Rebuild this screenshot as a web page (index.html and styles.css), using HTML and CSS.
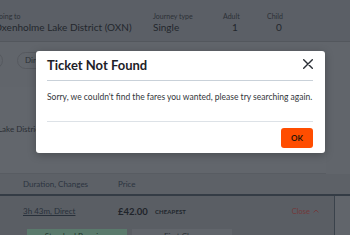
FILE: index.html
```html
<!DOCTYPE html>
<html>
<head>
<meta charset="utf-8">
<link rel="stylesheet" href="styles.css">
</head>
<body>
<div class="page">
  <div class="header">
    <div class="col col-going">
      <div class="label">Going to</div>
      <div class="value">Oxenholme Lake District (OXN)</div>
    </div>
    <div class="col col-journey">
      <div class="label">Journey type</div>
      <div class="value">Single</div>
    </div>
    <div class="col col-adult">
      <div class="label">Adult</div>
      <div class="value">1</div>
    </div>
    <div class="col col-child">
      <div class="label">Child</div>
      <div class="value">0</div>
    </div>
  </div>
  <div class="filters">
    <div class="pill pill-cut">Anytime</div>
    <div class="pill">Direct only</div>
  </div>
  <div class="summary">
    <div class="summary-text">Lake District</div>
  </div>
  <div class="table-head">
    <div class="th th-dur">Duration, Changes</div>
    <div class="th th-price">Price</div>
  </div>
  <div class="result">
    <div class="row">
      <div class="dur">3h 43m, Direct</div>
      <div class="price">£42.00</div>
      <div class="tag">CHEAPEST</div>
      <div class="close">Close <svg class="chev" width="6" height="4" viewBox="0 0 6 4"><path d="M0.6 3.4L3 1L5.4 3.4" stroke="#73393b" stroke-width="0.9" fill="none"/></svg></div>
    </div>
    <div class="classes">
      <div class="cls cls-std">Standard Premium</div>
      <div class="cls cls-first">First Class</div>
    </div>
  </div>
</div>
<div class="modal">
  <div class="modal-head">
    <div class="modal-title">Ticket Not Found</div>
    <svg class="x" width="10" height="10" viewBox="0 0 10 10"><path d="M0.7 0.7L9.3 9.3M9.3 0.7L0.7 9.3" stroke="#2b2f36" stroke-width="1.4" fill="none" stroke-linecap="round"/></svg>
  </div>
  <div class="modal-body">Sorry, we couldn't find the fares you wanted, please try searching again.</div>
  <div class="modal-foot">
    <button class="ok">OK</button>
  </div>
</div>
</body>
</html>
```
FILE: styles.css
```css
* { box-sizing: border-box; }
html, body { margin: 0; padding: 0; }
body {
  width: 350px;
  height: 235px;
  overflow: hidden;
  background: #61656b;
  font-family: Lato, "Noto Sans", sans-serif;
  color: #24282e;
  position: relative;
}
.page { width: 350px; }
.header {
  height: 42px;
  background: #5b5f66;
  border-bottom: 1px solid #53575d;
  display: flex;
  padding-top: 11px;
}
.col { display: flex; flex-direction: column; }
.col-going { margin-left: -6px; width: 159px; }
.col-journey { width: 70px; }
.col-adult { width: 44px; align-items: flex-start; }
.col-child { width: 40px; }
.label { font-size: 7px; line-height: 10px; color: #2c3036; }
.value { font-size: 10px; line-height: 13px; color: #23272d; }
.col-adult .value, .col-child .value { padding-left: 9px; }
.filters {
  display: flex;
  gap: 14px;
  padding-top: 10px;
  margin-left: -30px;
  height: 45px;
}
.pill {
  height: 17px;
  border: 1px solid #56595f;
  border-radius: 9px;
  font-size: 8px;
  line-height: 15px;
  padding: 0 7px;
  color: #2c3036;
}
.pill-cut { width: 33px; overflow: hidden; color: transparent; }
.summary {
  height: 87px;
  background: #62666c;
  border-bottom: 1px solid #585c62;
  padding-top: 37px;
  margin-right: 24px;
}
.summary-text { font-size: 8px; color: #2a2e34; margin-left: -2px; }
.table-head {
  display: flex;
  height: 22px;
  align-items: center;
  border-bottom: 2px solid #343c45;
  background: #5d6167;
  padding-left: 23px;
}
.th { font-size: 8px; color: #2c3440; }
.th-dur { width: 95px; }
.result {
  background: #5a5e64;
  border-right: 1px solid #3a424b;
  margin-right: 15px;
  padding-top: 8px;
}
.row {
  display: flex;
  align-items: center;
  padding-left: 23px;
  height: 14px;
}
.dur { width: 95px; font-size: 8px; text-decoration: underline; color: #28303a; }
.price { width: 37px; font-size: 9.5px; font-weight: bold; color: #1f242a; }
.tag { font-size: 6px; font-weight: bold; color: #20262c; letter-spacing: 0.1px; flex: 1; }
.close { font-size: 7.5px; color: #73393b; margin-right: 15px; display: flex; align-items: center; gap: 3px; }
.classes { display: flex; gap: 5px; padding-left: 27px; padding-top: 11px; }
.cls { width: 100px; height: 14px; font-size: 8px; text-align: center; line-height: 14px; }
.cls-std { background: #5a7a6c; color: #22352c; }
.cls-first { background: #61656b; color: #2a2e34; }
.modal {
  position: absolute;
  left: 36px;
  top: 51px;
  width: 289px;
  height: 102px;
  background: #ffffff;
  border-radius: 3px;
  box-shadow: 0 2px 8px rgba(0,0,0,0.25);
  padding: 0 12px 0 11px;
}
.modal-head {
  height: 30px;
  border-bottom: 1px solid #c9d1d9;
  display: flex;
  justify-content: space-between;
  align-items: flex-start;
}
.modal-title {
  font-size: 13px;
  font-weight: bold;
  color: #1d2127;
  padding-top: 7px;
  line-height: 15px;
}
.x { margin-top: 8px; }
.modal-body {
  height: 41px;
  border-bottom: 1px solid #dde2e7;
  font-size: 8.5px;
  color: #33363b;
  padding-top: 11px;
  line-height: 10px;
  white-space: nowrap;
}
.modal-foot { display: flex; justify-content: flex-end; padding-top: 6px; }
.ok {
  width: 32px;
  height: 20px;
  border: none;
  border-radius: 3px;
  background: #ff4d00;
  font-family: Lato, sans-serif;
  font-weight: bold;
  font-size: 8px;
  color: #2a1608;
  padding: 0;
}
```
